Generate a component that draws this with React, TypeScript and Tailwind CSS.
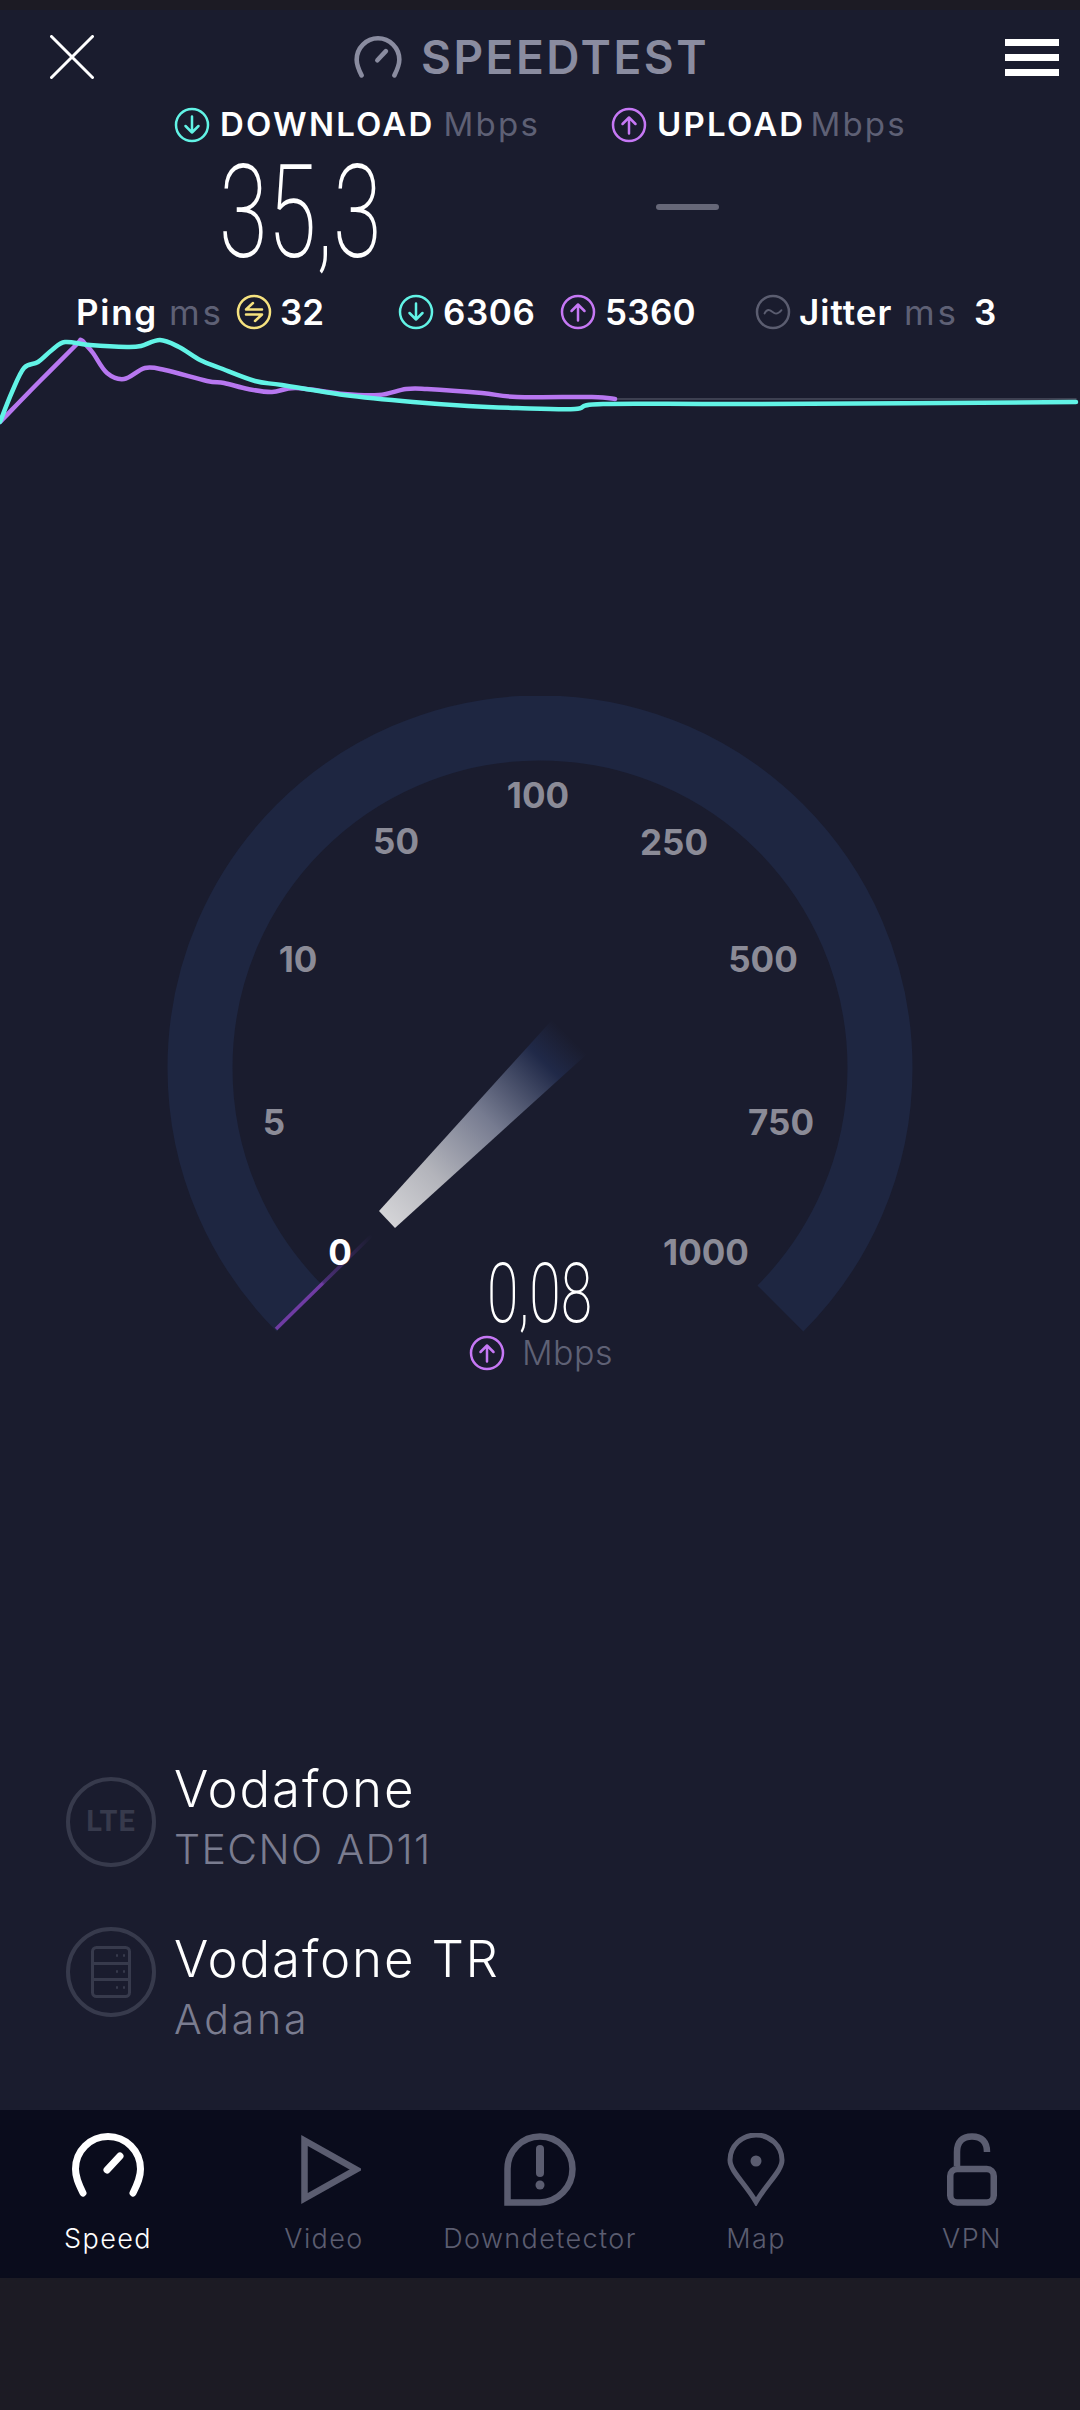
const FONT = "font-['Inter','Noto_Sans',sans-serif]";

const CYAN = '#62f3e6';
const PURPLE = '#c678f5';
const YELLOW = '#f6e27f';
const DIM = '#5b5d70';

const DownIcon = () => (
  <svg viewBox="0 0 36 36" className="w-[36px] h-[36px] shrink-0" fill="none" stroke={CYAN} strokeWidth="2.5" strokeLinecap="round" strokeLinejoin="round">
    <circle cx="18" cy="18" r="16" />
    <path d="M18 9.5v16M11.5 19l6.5 6.5 6.5-6.5" />
  </svg>
);

const UpIcon = () => (
  <svg viewBox="0 0 36 36" className="w-[36px] h-[36px] shrink-0" fill="none" stroke={PURPLE} strokeWidth="2.5" strokeLinecap="round" strokeLinejoin="round">
    <circle cx="18" cy="18" r="16" />
    <path d="M18 26.5v-16M11.5 17l6.5-6.5 6.5 6.5" />
  </svg>
);

const PingIcon = () => (
  <svg viewBox="0 0 36 36" className="w-[36px] h-[36px] shrink-0" fill="none" stroke={YELLOW} strokeWidth="2.5" strokeLinecap="round" strokeLinejoin="round">
    <circle cx="18" cy="18" r="16" />
    <path d="M26 15.5H10l7-6.5M10 20.5h16l-7 6.5" />
  </svg>
);

const JitterIcon = () => (
  <svg viewBox="0 0 36 36" className="w-[36px] h-[36px] shrink-0" fill="none" stroke={DIM} strokeWidth="2.5" strokeLinecap="round">
    <circle cx="18" cy="18" r="16" />
    <path d="M9.5 19.5c1.5-3 3.5-4 5.5-3.2s3.6 3.4 6 3.4c1.8 0 3.4-1 5.5-3.5" strokeWidth="1.8" />
  </svg>
);

// gauge mark, used in the header and in the tab bar
const GaugeIcon = ({ color, className }: { color: string; className: string }) => (
  <svg viewBox="0 0 72 64" className={className} fill="none" stroke={color} strokeWidth="7" strokeLinecap="round">
    <path d="M11 60C6 50 3.5 44 3.5 36a32.5 32.5 0 0 1 65 0c0 8-2.5 14-7.5 24" />
    <path d="M35 37l13-14" />
  </svg>
);

const LABELS = [
  { text: '100', cls: 'left-[538px] top-[99px] text-[#8b8b97]' },
  { text: '50', cls: 'left-[396px] top-[145px] text-[#8b8b97]' },
  { text: '250', cls: 'left-[674px] top-[146px] text-[#8b8b97]' },
  { text: '10', cls: 'left-[298px] top-[263px] text-[#8b8b97]' },
  { text: '500', cls: 'left-[763px] top-[263px] text-[#8b8b97]' },
  { text: '5', cls: 'left-[274px] top-[426px] text-[#8b8b97]' },
  { text: '750', cls: 'left-[781px] top-[426px] text-[#8b8b97]' },
  { text: '0', cls: 'left-[340px] top-[556px] text-white' },
  { text: '1000', cls: 'left-[706px] top-[556px] text-[#8b8b97]' },
];

const CHART_CYAN: [number, number][] = [[0, 422], [12, 392], [24, 368], [38, 362], [52, 350], [65, 342], [90, 345], [127, 347], [141, 346], [160, 340], [179, 347], [200, 360], [220, 368], [255, 381], [282, 385], [344, 395], [413, 402], [468, 406], [517, 408], [575, 409], [603, 404], [758, 404], [1076, 402]];
const CHART_PURPLE: [number, number][] = [[0, 422], [40, 381], [76, 345], [81, 340], [86, 345], [93, 353], [107, 373], [124, 379], [145, 368], [165, 370], [207, 381], [224, 383], [248, 389], [272, 392], [296, 388], [344, 394], [379, 395], [406, 389], [427, 389], [482, 393], [517, 397], [592, 397], [615, 399]];

// rounds the sampled points off into a curve
const smooth = (pts: [number, number][]) => {
  let d = `M${pts[0][0]} ${pts[0][1]}`;
  for (let i = 0; i < pts.length - 1; i++) {
    const p0 = pts[Math.max(i - 1, 0)];
    const p1 = pts[i];
    const p2 = pts[i + 1];
    const p3 = pts[Math.min(i + 2, pts.length - 1)];
    const c1x = p1[0] + (p2[0] - p0[0]) / 6;
    const c1y = p1[1] + (p2[1] - p0[1]) / 6;
    const c2x = p2[0] - (p3[0] - p1[0]) / 6;
    const c2y = p2[1] - (p3[1] - p1[1]) / 6;
    d += `C${c1x.toFixed(1)} ${c1y.toFixed(1)} ${c2x.toFixed(1)} ${c2y.toFixed(1)} ${p2[0]} ${p2[1]}`;
  }
  return d;
};

const Gauge = () => (
  <div className="relative h-[700px] w-full">
    <svg viewBox="0 696 1080 700" className="block w-[1080px] h-[700px]" fill="none">
      <defs>
        <linearGradient id="needle" gradientUnits="userSpaceOnUse" x1="387" y1="1220" x2="570" y2="1037">
          <stop offset="0" stopColor="#d4d4d7" />
          <stop offset="0.25" stopColor="#b3b4bb" />
          <stop offset="0.55" stopColor="#767b90" />
          <stop offset="0.86" stopColor="#202948" />
          <stop offset="1" stopColor="#1a1c2e" />
        </linearGradient>
        <linearGradient id="tick" gradientUnits="userSpaceOnUse" x1="276" y1="1329" x2="372" y2="1235">
          <stop offset="0" stopColor="#6f3ba3" />
          <stop offset="0.48" stopColor="#6f3ba3" />
          <stop offset="0.5" stopColor="#4a2f76" />
          <stop offset="1" stopColor="#1a1c2e" />
        </linearGradient>
      </defs>
      <path d="M299.6 1308.4A340 340 0 1 1 780.4 1308.4" stroke="#1e2641" strokeWidth="65" />
      <path d="M276 1329L372 1235" stroke="url(#tick)" strokeWidth="3.5" />
      <polygon points="552,1020 587,1054 395,1228 379,1211" fill="url(#needle)" />
    </svg>

    {LABELS.map(l => (
      <span key={l.text} className={`absolute -translate-x-1/2 -translate-y-1/2 text-[35px] leading-none font-bold ${l.cls}`}>
        {l.text}
      </span>
    ))}

    <div className="absolute left-[487px] top-[556px] h-[84px] text-white font-['Roboto',sans-serif] font-extralight text-[84px] leading-[84px] origin-left scale-x-[0.68] whitespace-nowrap">
      0,08
    </div>
    <div className="absolute left-[469px] top-[639px] flex items-center gap-[17px]">
      <UpIcon />
      <span className="text-[34px] leading-none font-light tracking-[0.5px] text-[#5f6175]">Mbps</span>
    </div>
  </div>
);

const InfoRow = ({ icon, title, sub, textCls, subCls }: { icon: React.ReactNode; title: string; sub: string; textCls: string; subCls: string }) => (
  <div className="flex items-start h-[96px] ml-[66px]">
    <div className="w-[90px] h-[90px] rounded-full border-[4px] border-[#373a4c] flex items-center justify-center shrink-0">
      {icon}
    </div>
    <div className={`ml-[18px] ${textCls}`}>
      <p className="text-[51px] leading-[70px] font-light tracking-[1.8px] text-white">{title}</p>
      <p className={`text-[41px] leading-[50px] font-light text-[#7a7c90] ${subCls}`}>{sub}</p>
    </div>
  </div>
);

const TabLabel = ({ text, active }: { text: string; active?: boolean }) => (
  <span className={`mt-[16px] text-[27px] leading-[34px] font-light tracking-[1.4px] ${active ? 'text-white' : 'text-[#5b5d70]'}`}>{text}</span>
);

export default function App() {
  return (
    <div className={`w-[1080px] h-[2410px] flex flex-col bg-[#1c1b24] ${FONT}`}>
      <div className="h-[10px] shrink-0" />

      <main className="flex-1 flex flex-col bg-[#1a1c2e] overflow-hidden">
        {/* header */}
        <div className="flex items-center h-[46px] mt-[24px]">
          <svg viewBox="0 0 44 44" className="w-[44px] h-[44px] ml-[50px]" stroke="#fff" strokeWidth="3" strokeLinecap="round">
            <path d="M1.5 1.5l41 41M42.5 1.5l-41 41" />
          </svg>
          <GaugeIcon color="#8a8ca0" className="w-[48px] h-[42px] ml-[260px]" />
          <span className="ml-[19px] text-[46px] leading-none font-semibold text-[#8a8ca0] tracking-[2.5px]">SPEEDTEST</span>
          <div className="ml-auto mr-[21px] flex flex-col gap-[8px]">
            <div className="w-[54px] h-[7px] bg-white" />
            <div className="w-[54px] h-[7px] bg-white" />
            <div className="w-[54px] h-[7px] bg-white" />
          </div>
        </div>

        {/* download / upload */}
        <div className="flex items-center h-[36px] mt-[27px] ml-[174px] text-[33px] tracking-[2.2px]">
          <div className="w-[437px] flex items-center">
            <DownIcon />
            <span className="ml-[10px] font-semibold text-white">DOWNLOAD</span>
            <span className="ml-[9px] text-[#5e6075]">Mbps</span>
          </div>
          <div className="flex items-center">
            <UpIcon />
            <span className="ml-[10px] font-semibold text-white">UPLOAD</span>
            <span className="ml-[5px] text-[#5e6075]">Mbps</span>
          </div>
        </div>

        {/* values */}
        <div className="flex items-center h-[104px] mt-[18px] ml-[219px]">
          <span className="w-[437px] font-['Roboto',sans-serif] font-extralight text-[130px] leading-[104px] text-white origin-left scale-x-[0.68] whitespace-nowrap">35,3</span>
          <div className="w-[63px] h-[6px] rounded-full bg-[#666778] -mt-[13px]" />
        </div>

        {/* ping row */}
        <div className="flex items-center h-[36px] mt-[29px] ml-[76px] text-[35px] font-semibold text-white whitespace-nowrap">
          <span className="w-[81px] tracking-[1.7px]">Ping</span>
          <span className="ml-[12px] w-[55px] font-normal tracking-[2.8px] text-[#5e6075]">ms</span>
          <span className="ml-[12px]"><PingIcon /></span>
          <span className="ml-[8px] w-[42px]">32</span>
          <span className="ml-[76px]"><DownIcon /></span>
          <span className="ml-[9px] w-[91px] tracking-[0.6px]">6306</span>
          <span className="ml-[26px]"><UpIcon /></span>
          <span className="ml-[9px] w-[88px] tracking-[0.3px]">5360</span>
          <span className="ml-[62px]"><JitterIcon /></span>
          <span className="ml-[8px] w-[95px] tracking-[1px]">Jitter</span>
          <span className="ml-[10px] w-[55px] font-normal tracking-[2.8px] text-[#5e6075]">ms</span>
          <span className="ml-[15px]">3</span>
        </div>

        {/* graph */}
        <svg viewBox="0 330 1080 100" className="block w-[1080px] h-[100px] shrink-0" fill="none" strokeLinejoin="round" strokeLinecap="round">
          <path d="M615 399H1076" stroke="#4a4c5e" strokeWidth="1.5" />
          <path d={smooth(CHART_PURPLE)} stroke="#b777f0" strokeWidth="4.5" />
          <path d={smooth(CHART_CYAN)} stroke={CYAN} strokeWidth="4.5" />
        </svg>

        <div className="mt-[266px]">
          <Gauge />
        </div>

        <div className="mt-[381px] flex flex-col gap-[54px]">
          <InfoRow
            title="Vodafone"
            sub="TECNO AD11"
            textCls="-mt-[23px]"
            subCls="tracking-[1.4px]"
            icon={<span className="text-[29px] font-bold text-[#373a4c] font-['Roboto',sans-serif] tracking-[1px]">LTE</span>}
          />
          <InfoRow
            title="Vodafone TR"
            sub="Adana"
            textCls="-mt-[3px]"
            subCls="tracking-[2.8px]"
            icon={
              <svg viewBox="0 0 40 52" className="w-[40px] h-[52px]" fill="none" stroke="#373a4c" strokeWidth="3">
                <rect x="1.5" y="1.5" width="37" height="49" rx="4" />
                <path d="M1.5 17.5h37M1.5 33.5h37" />
                <path d="M25 9.5h2M32 9.5h2M25 25.5h2M32 25.5h2M25 41.5h2M32 41.5h2" strokeWidth="2.5" />
              </svg>
            }
          />
        </div>
      </main>

      {/* tab bar */}
      <nav className="h-[168px] shrink-0 grid grid-cols-5 bg-[#0a0c1c] pt-[23px]">
        <div className="flex flex-col items-center">
          <div className="h-[73px] flex items-start">
            <GaugeIcon color="#ffffff" className="w-[72px] h-[64px]" />
          </div>
          <TabLabel text="Speed" active />
        </div>
        <div className="flex flex-col items-center">
          <svg viewBox="0 0 60 73" className="w-[60px] h-[73px] ml-[14px]" fill="none" stroke={DIM} strokeWidth="6.5">
            <path d="M3.5 7.5V65.5L55 36.5Z" />
          </svg>
          <TabLabel text="Video" />
        </div>
        <div className="flex flex-col items-center">
          <svg viewBox="0 0 72 73" className="w-[72px] h-[73px]" fill="none" stroke={DIM} strokeWidth="6.5">
            <path d="M3.5 69.5V36a32.5 32.5 0 0 1 65 0 33.5 33.5 0 0 1-32.5 33.5Z" />
            <path d="M36 16v24" strokeWidth="8" strokeLinecap="round" />
            <circle cx="36" cy="52" r="4.5" fill={DIM} stroke="none" />
          </svg>
          <TabLabel text="Downdetector" />
        </div>
        <div className="flex flex-col items-center">
          <svg viewBox="0 0 58 73" className="w-[58px] h-[73px]" fill="none" stroke={DIM} strokeWidth="5">
            <path d="M29 69C18 50 3 38 3 27a26 25 0 0 1 52 0c0 11-15 23-26 42Z" />
            <circle cx="29" cy="28" r="5.5" fill={DIM} stroke="none" />
          </svg>
          <TabLabel text="Map" />
        </div>
        <div className="flex flex-col items-center">
          <svg viewBox="0 0 50 73" className="w-[50px] h-[73px]" fill="none" stroke={DIM} strokeWidth="6.5">
            <rect x="3.25" y="36" width="43.5" height="33.5" rx="7" />
            <path d="M10 33V19C10 9 15 3.5 25 3.5S40 9 40 19" />
          </svg>
          <TabLabel text="VPN" />
        </div>
      </nav>

      <div className="h-[132px] shrink-0" />
    </div>
  );
}
